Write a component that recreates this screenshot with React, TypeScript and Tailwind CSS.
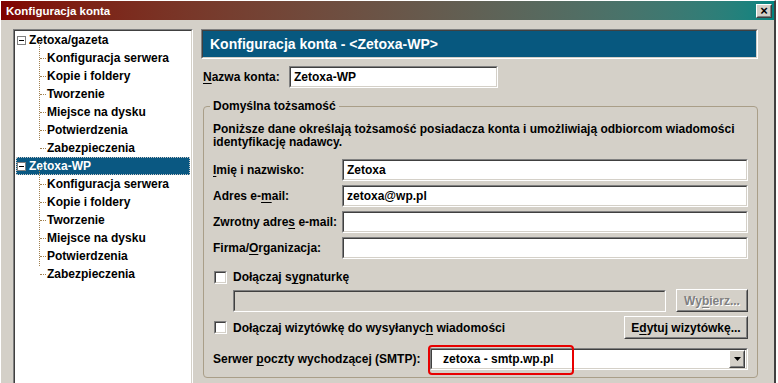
import React from "react";

const font = { fontFamily: '"Liberation Sans", Arial, sans-serif' };

function Sunken({ className = "", inner = "", children }: { className?: string; inner?: string; children?: React.ReactNode }) {
  return (
    <div className={`border border-t-[#808080] border-l-[#808080] border-b-white border-r-white ${className}`}>
      <div className={`h-full w-full border border-t-[#404040] border-l-[#404040] border-b-[#d4d0c8] border-r-[#d4d0c8] ${inner}`}>{children}</div>
    </div>
  );
}

function Raised({ className = "", children }: { className?: string; children?: React.ReactNode }) {
  return (
    <div className={`border border-t-white border-l-white border-b-[#404040] border-r-[#404040] bg-[#d4d0c8] ${className}`}>
      <div className="flex h-full w-full items-center justify-center border border-t-[#d4d0c8] border-l-[#d4d0c8] border-b-[#808080] border-r-[#808080]">
        {children}
      </div>
    </div>
  );
}

function Field({ value = "", className = "" }: { value?: string; className?: string }) {
  return (
    <Sunken className={`h-[22px] ${className}`} inner="bg-white flex items-center px-[3px]">
      <span>{value}</span>
    </Sunken>
  );
}

function Check() {
  return <Sunken className="h-[13px] w-[13px] shrink-0" inner="bg-white" />;
}

function U({ children }: { children: React.ReactNode }) {
  return <span className="underline underline-offset-[2px]">{children}</span>;
}

function Minus() {
  return (
    <div className="flex h-[9px] w-[9px] shrink-0 items-center justify-center border border-[#808080] bg-white">
      <div className="h-px w-[5px] bg-black" />
    </div>
  );
}

const children = ["Konfiguracja serwera", "Kopie i foldery", "Tworzenie", "Miejsce na dysku", "Potwierdzenia", "Zabezpieczenia"];

function TreeGroup({ name, selected }: { name: string; selected?: boolean }) {
  return (
    <div>
      <div
        className={`flex h-[18px] items-center gap-[3px] pl-[1px] ${selected ? "bg-[#0a5882] text-white outline outline-1 outline-dotted outline-[#c8c8c8] -outline-offset-1" : ""}`}
      >
        <Minus />
        <span>{name}</span>
      </div>
      <div className="relative">
        <div className="absolute left-[23px] top-[-7px] h-[98px] border-l border-dotted border-[#a08050]" />
        {children.map((c) => (
          <div key={c} className="flex h-[18px] items-center pl-[24px]">
            <div className="mr-[1px] w-[6px] border-t border-dotted border-[#a08050]" />
            <span>{c}</span>
          </div>
        ))}
      </div>
    </div>
  );
}

export default function App() {
  return (
    <div className="flex h-[383px] w-[778px] overflow-hidden bg-white text-[12px] leading-[14px] font-bold text-black" style={font}>
      <div className="flex h-full w-[776px] flex-col border-l border-t border-white border-r-2 border-r-[#404040] bg-[#d4d0c8]">
        {/* title bar */}
        <div className="flex h-[19px] shrink-0 items-center justify-between bg-gradient-to-r from-[#800000] to-[#008581] pl-[5px] pr-[2px]">
          <span className="text-[11.5px] text-white">Konfiguracja konta</span>
          <Raised className="h-[14px] w-[16px]">
            <span className="text-[13px] leading-none">×</span>
          </Raised>
        </div>
        {/* body */}
        <div className="flex flex-1 pl-[12px] pt-[9px]">
          <Sunken className="h-[360px] w-[180px] shrink-0" inner="bg-white px-[1px]">
            <TreeGroup name="Zetoxa/gazeta" />
            <TreeGroup name="Zetoxa-WP" selected />
          </Sunken>
          <div className="ml-[8px] flex w-[557px] flex-col">
            <Sunken className="h-[30px]" inner="bg-[#07587f] flex items-center pl-[7px]">
              <span className="text-[14px] leading-[16px] text-white">Konfiguracja konta - &lt;Zetoxa-WP&gt;</span>
            </Sunken>
            <div className="mt-[7px] flex items-center pl-[2px]">
              <span className="w-[86px]">
                <U>N</U>azwa konta:
              </span>
              <Field value="Zetoxa-WP" className="w-[209px]" />
            </div>
            <fieldset className="ml-[2px] mt-[12px] h-[278px] rounded-[4px] border border-[#a99e88] px-[6px]">
              <legend className="px-[3px] leading-[13px]">Domyślna tożsamość</legend>
              <div className="px-[3px]">
                <p className="mt-[10px] leading-[13px]">
                  Poniższe dane określają tożsamość posiadacza konta i umożliwiają odbiorcom wiadomości
                  <br />
                  identyfikację nadawcy.
                </p>
                <div className="mt-[10px] flex flex-col gap-[4px]">
                  <div className="flex items-center">
                    <span className="w-[129px]">
                      <U>I</U>mię i nazwisko:
                    </span>
                    <Field value="Zetoxa" className="flex-1" />
                  </div>
                  <div className="flex items-center">
                    <span className="w-[129px]">
                      Adres e-<U>m</U>ail:
                    </span>
                    <Field value="zetoxa@wp.pl" className="flex-1" />
                  </div>
                  <div className="flex items-center">
                    <span className="w-[129px]">
                      Zwrotny adre<U>s</U> e-mail:
                    </span>
                    <Field className="flex-1" />
                  </div>
                  <div className="flex items-center">
                    <span className="w-[129px]">
                      Firma/<U>O</U>rganizacja:
                    </span>
                    <Field className="flex-1" />
                  </div>
                </div>
                <div className="mt-[11px] flex items-center gap-[6px] pl-[1px]">
                  <Check />
                  <span>
                    Dołączaj s<U>y</U>gnaturkę
                  </span>
                </div>
                <div className="mt-[5px] flex items-center pl-[20px]">
                  <Sunken className="h-[22px] flex-1" inner="bg-[#d4d0c8]" />
                  <Raised className="ml-[10px] h-[23px] w-[72px]">
                    <span className="text-[#808080] [text-shadow:1px_1px_0_#fff]">
                      Wy<U>b</U>ierz...
                    </span>
                  </Raised>
                </div>
                <div className="mt-[4px] flex items-center">
                  <div className="flex flex-1 items-center gap-[6px] pl-[1px]">
                    <Check />
                    <span>
                      Dołączaj wizytówkę do wysyłanyc<U>h</U> wiadomości
                    </span>
                  </div>
                  <Raised className="h-[23px] w-[124px]">
                    <span>
                      E<U>d</U>ytuj wizytówkę...
                    </span>
                  </Raised>
                </div>
                <div className="mt-[9px] flex items-center">
                  <span className="w-[217px]">
                    Serwer <U>p</U>oczty wychodzącej (SMTP):
                  </span>
                  <div className="relative flex-1">
                    <Sunken className="h-[22px]" inner="bg-white flex items-center justify-between pl-[11px] pr-[1px]">
                      <span>zetoxa - smtp.wp.pl</span>
                      <Raised className="h-[18px] w-[16px]">
                        <svg width="7" height="4" viewBox="0 0 7 4">
                          <path d="M0 0h7L3.5 4z" fill="#000" />
                        </svg>
                      </Raised>
                    </Sunken>
                    <div className="pointer-events-none absolute left-[-2px] top-[-3px] h-[30px] w-[146px] rounded-[4px] border-2 border-[#e80000]" />
                  </div>
                </div>
              </div>
            </fieldset>
          </div>
        </div>
      </div>
    </div>
  );
}
